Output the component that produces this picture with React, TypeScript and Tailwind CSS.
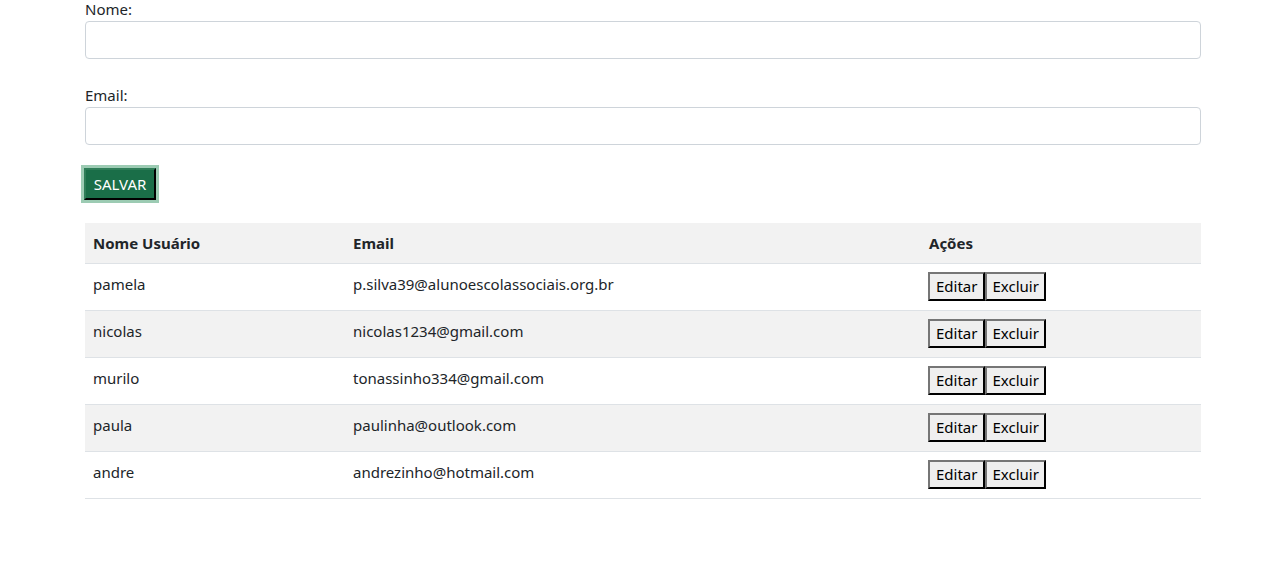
import React from "react";

const usuarios = [
  { nome: "pamela", email: "p.silva39@alunoescolassociais.org.br" },
  { nome: "nicolas", email: "nicolas1234@gmail.com" },
  { nome: "murilo", email: "tonassinho334@gmail.com" },
  { nome: "paula", email: "paulinha@outlook.com" },
  { nome: "andre", email: "andrezinho@hotmail.com" },
];

const btnAcao =
  "h-[29px] bg-[#efefef] text-black border-2 border-t-[#767676] border-l-[#767676] border-r-black border-b-black";

export default function App() {
  return (
    <div className="min-h-[579px] bg-white text-[#212529] font-['Noto_Sans',sans-serif] text-[15px]">
      <div className="ml-[85px] w-[1116px]">
        {/* formulario */}
        <label className="block leading-[18px] mb-[3px]">Nome:</label>
        <input
          type="text"
          className="block w-full h-[38px] rounded-[4px] border border-[#ced4da] px-3 outline-none"
        />

        <label className="block leading-[18px] mt-[27px] mb-[3px]">Email:</label>
        <input
          type="text"
          className="block w-full h-[38px] rounded-[4px] border border-[#ced4da] px-3 outline-none"
        />

        <div className="mt-[20px] -ml-[4px] inline-block border-[3px] border-[#9ccbb3]">
          <button className="h-[32px] w-[72px] bg-[#1a6e48] text-white border-2 border-t-[#2f7d58] border-l-[#2f7d58] border-r-black border-b-black">
            SALVAR
          </button>
        </div>

        {/* tabela */}
        <table className="mt-[20px] w-full border-collapse">
          <thead>
            <tr className="bg-[#f2f2f2] border-b border-[#dee2e6]">
              <th className="w-[260px] h-[40px] px-2 text-left font-bold">Nome Usuário</th>
              <th className="w-[576px] px-2 text-left font-bold">Email</th>
              <th className="px-2 text-left font-bold">Ações</th>
            </tr>
          </thead>
          <tbody>
            {usuarios.map((u, i) => (
              <tr
                key={u.nome}
                className={`border-b border-[#dee2e6] ${i % 2 === 1 ? "bg-[#f2f2f2]" : "bg-white"}`}
              >
                <td className="h-[47px] px-2 pb-[4px]">{u.nome}</td>
                <td className="px-2 pb-[4px]">{u.email}</td>
                <td className="px-2">
                  <div className="flex -ml-px">
                    <button className={`${btnAcao} px-[6px]`}>Editar</button>
                    <button className={`${btnAcao} px-[5px]`}>Excluir</button>
                  </div>
                </td>
              </tr>
            ))}
          </tbody>
        </table>
      </div>
    </div>
  );
}
